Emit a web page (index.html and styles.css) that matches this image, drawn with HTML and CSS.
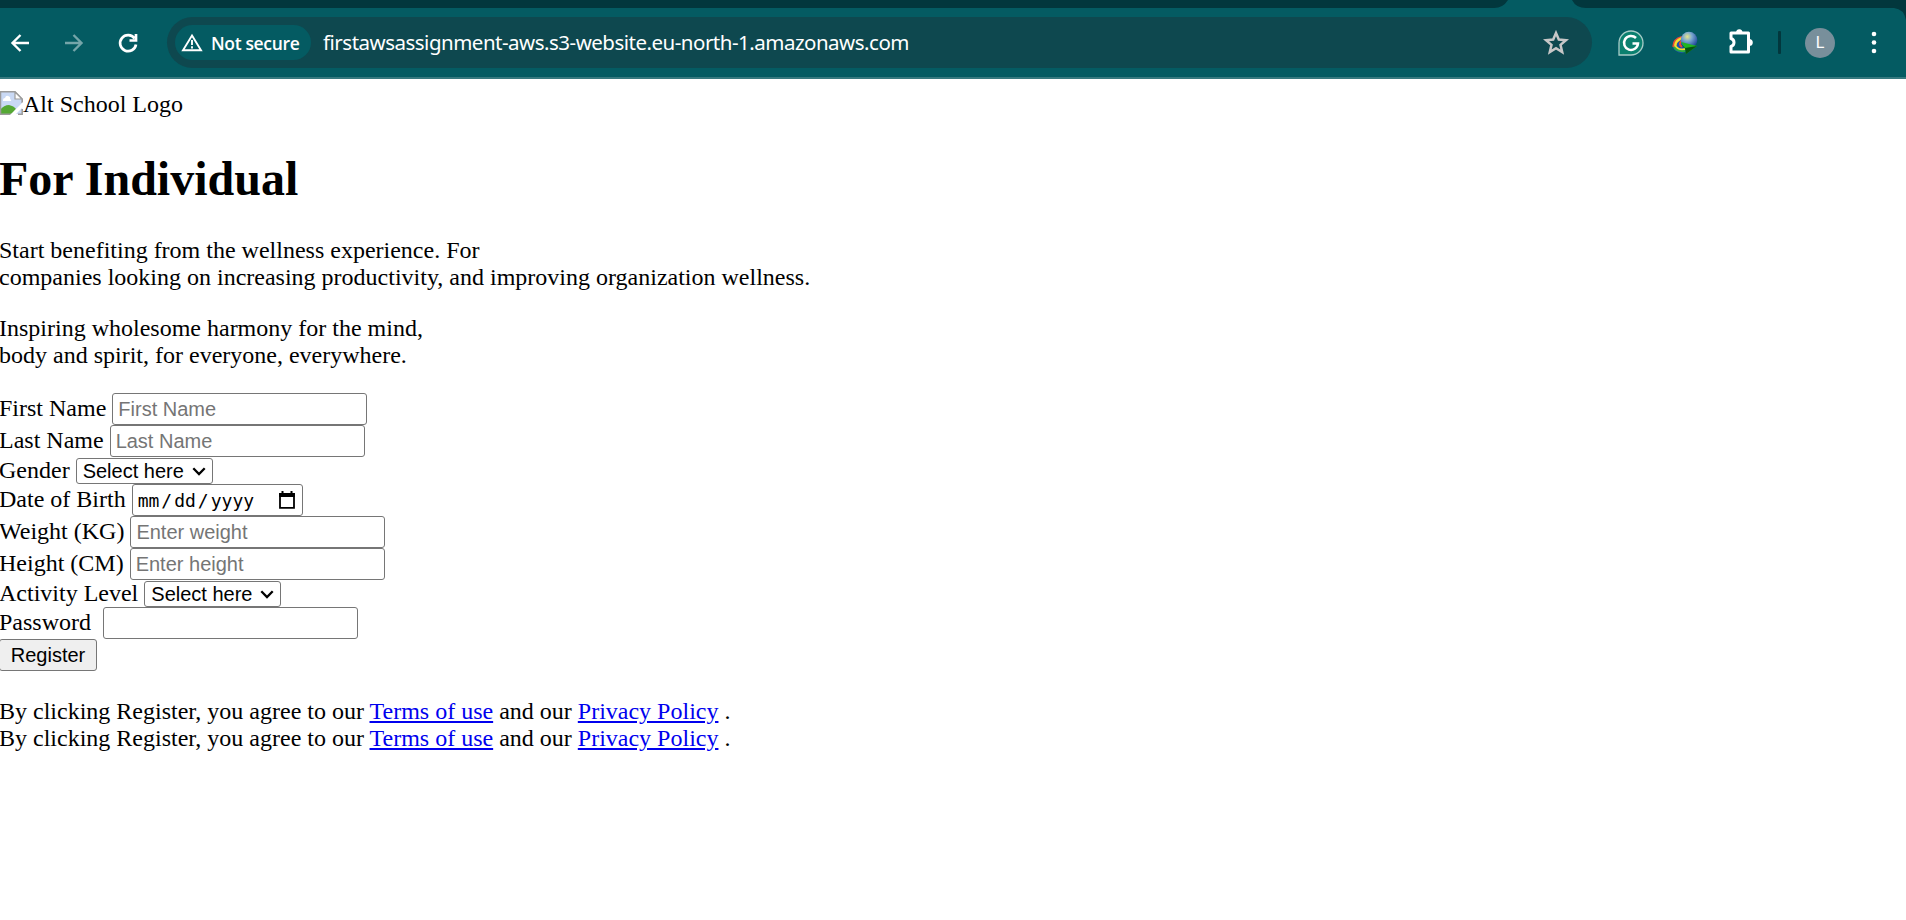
FILE: index.html
```html
<!DOCTYPE html>
<html lang="en">
<head>
<meta charset="utf-8">
<title>For Individual</title>
<link rel="stylesheet" href="styles.css">
</head>
<body>
<header class="browser">
  <div class="tabs">
    <svg class="tab-shape" width="426" height="24" viewBox="0 0 426 24"><path d="M0 0H28Q23 8 14 8H0ZM92 0Q96 8 106 8H414Q424 9 426 20V0Z" fill="#02373d"/></svg>
  </div>
  <div class="toolbar">
    <svg class="nav back" width="20" height="20" viewBox="0 0 20 20"><path d="M19 10H3M10.5 2L2.5 10L10.5 18" /></svg>
    <svg class="nav forward" width="20" height="20" viewBox="0 0 20 20"><path d="M1 10H17M9.500 2L17.500 10L9.500 18" /></svg>
    <svg class="nav reload" width="22" height="22" viewBox="0 0 22 22"><path d="M17.600 6.500A8 8 0 1 0 19 12.500M19 2V8.500H12.500" /></svg>
    <div class="omnibox">
      <div class="chip">
        <svg width="22" height="19" viewBox="0 0 22 19"><path d="M11 2.500L20 17.200H2Z" fill="none" stroke="#fff" stroke-width="1.900"/><path d="M11 7V12M11 13.300V15.500" stroke="#fff" stroke-width="1.900"/></svg>
        <span class="chip-text">Not secure</span>
      </div>
      <span class="url">firstawsassignment-aws.s3-website.eu-north-1.amazonaws.com</span>
      <svg class="star" width="26" height="25" viewBox="0 0 26 25"><path d="M13 3L15.800 9.600L23 10.200L17.500 14.900L19.200 22L13 18.200L6.800 22L8.500 14.900L3 10.200L10.200 9.600Z" fill="none" stroke="#c7c7c7" stroke-width="2.500"/></svg>
    </div>
    <svg class="ext grammarly" width="26" height="26" viewBox="0 0 26 26"><path d="M1 25V13A12 12 0 1 1 13 25Z" fill="#0b806f" stroke="#a8ccc8" stroke-width="1.300"/><path d="M18 8A7 7 0 1 0 20 13.500H14.500" fill="none" stroke="#fff" stroke-width="2.500"/></svg>
    <svg class="ext idm" width="26" height="24" viewBox="0 0 26 24">
      <defs><radialGradient id="globe" cx=".4" cy=".3" r=".7"><stop offset="0" stop-color="#e6e58a"/><stop offset=".4" stop-color="#7ba9cf"/><stop offset="1" stop-color="#1d4399"/></radialGradient></defs>
      <path d="M9 5C0 8-1 17 4 20C8 23 12 22 15 20L10 15Z" fill="#1a4fb0"/>
      <path d="M10 6C3 8 1 12 1.500 16" fill="none" stroke="#e84835" stroke-width="2"/>
      <path d="M11 7C3 9 2 15 5 17Q8 20 13 18" fill="none" stroke="#f4dc2c" stroke-width="2.400"/>
      <path d="M2 16Q5 21 13 20" fill="none" stroke="#29a945" stroke-width="2"/>
      <path d="M11 9C7 11 7 14 10 16" fill="none" stroke="#e84835" stroke-width="2"/>
      <circle cx="17" cy="9" r="8.300" fill="url(#globe)"/>
      <path d="M9 11L25 15L14 23L13 17Z" fill="#20b51f"/><path d="M13 17L25 15L14 23Z" fill="#07540f"/>
    </svg>
    <svg class="ext puzzle" width="27" height="27" viewBox="0 0 27 27"><path d="M4 5H21.500V24H4V18.500Q7 17.500 7 14.500T4 10.500Z" fill="none" stroke="#fff" stroke-width="3" stroke-linejoin="round"/><path d="M9 5A3.300 3.800 0 0 1 15.600 5ZM22 11A3.800 3.500 0 0 1 22 18Z" fill="#fff"/></svg>
    <span class="divider"></span>
    <span class="avatar">L</span>
    <svg class="menu" width="6" height="24" viewBox="0 0 6 24"><circle cx="3" cy="3" r="2.300"/><circle cx="3" cy="11.500" r="2.300"/><circle cx="3" cy="20" r="2.300"/></svg>
  </div>
</header>

<main class="page">
  <div class="logo">
    <svg width="24" height="24" viewBox="-1 0 24 24"><path d="M0 .8H15L22.200 8V23H0" fill="#c9d9f5"/><path d="M0 19Q4 14 9 14Q14 15 16 18L12 23H0Z" fill="#55a834"/><path d="M3 9Q3 7 5 7Q6 4 8 5Q11 6 10 8Q12 9 11 10H3Z" fill="#fff"/><path d="M0 .8H15L22.200 8V12M.5 1V23.200H12M18 23.200H22.200V18" fill="none" stroke="#9b9b9b" stroke-width="1.500"/><path d="M15 1V8H22Z" fill="#fff" stroke="#9b9b9b" stroke-width="1.200"/><path d="M23 11V16L15 24H10Z" fill="#fff"/></svg>
    <span>Alt School Logo</span>
  </div>
  <h1 class="title">For Individual</h1>
  <p class="text">Start benefiting from the wellness experience. For<br>companies looking on increasing productivity, and improving organization wellness.</p>
  <p class="text">Inspiring wholesome harmony for the mind,<br>body and spirit, for everyone, everywhere.</p>
  <form class="form">
    <div class="row"><label for="first">First Name</label><input class="field" id="first" placeholder="First Name"></div>
    <div class="row"><label for="last">Last Name</label><input class="field" id="last" placeholder="Last Name"></div>
    <div class="row short"><label>Gender</label><span class="select">Select here<svg width="14" height="9" viewBox="0 0 14 9"><path d="M1.300 1.300L7 7L12.700 1.300"/></svg></span></div>
    <div class="row"><label>Date of Birth</label><span class="date"><span>mm<i>/</i>dd<i>/</i>yyyy</span><svg width="16" height="18" viewBox="0 0 16 18"><path d="M1 3H15V16.800H1Z" fill="none" stroke="#000" stroke-width="1.800"/><path d="M.2 2H15.800V6H.2ZM2.500 0H4.500V3H2.500ZM11.500 0H13.500V3H11.500Z"/></svg></span></div>
    <div class="row"><label for="weight">Weight (KG)</label><input class="field" id="weight" placeholder="Enter weight"></div>
    <div class="row"><label for="height">Height (CM)</label><input class="field" id="height" placeholder="Enter height"></div>
    <div class="row short"><label>Activity Level</label><span class="select">Select here<svg width="14" height="9" viewBox="0 0 14 9"><path d="M1.300 1.300L7 7L12.700 1.300"/></svg></span></div>
    <div class="row password"><label for="pass">Password</label><input class="field" id="pass" type="password"></div>
    <button class="register" type="button">Register</button>
  </form>
  <p class="terms">By clicking Register, you agree to our <a href="#">Terms of use</a> and our <a href="#">Privacy Policy</a> .<br>By clicking Register, you agree to our <a href="#">Terms of use</a> and our <a href="#">Privacy Policy</a> .</p>
</main>
</body>
</html>
```
FILE: styles.css
```css
* { box-sizing: border-box; }
body {
  margin: 0;
  height: 920px;
  overflow: hidden;
  background: #fff;
  color: #000;
  font: 24px/27px "Liberation Serif", serif;
}
.browser { position: relative; height: 79px; background: #045b62; border-bottom: 2px solid #36797f; }
.tabs { height: 8px; background: linear-gradient(90deg, #02373d 1480px, #045b62 1480px); }
.tab-shape { position: absolute; top: 0; right: 0; }
.toolbar { display: flex; align-items: center; height: 69px; padding-right: 29px; }
.nav { fill: none; stroke: #fff; stroke-width: 2.4; }
.back { margin-left: 10px; }
.forward { margin-left: 34px; opacity: .45; }
.reload { margin-left: 33px; stroke-width: 2.7; }
.omnibox {
  display: flex;
  align-items: center;
  width: 1425px;
  height: 51px;
  margin-left: 28px;
  padding: 0 23px 0 8px;
  border-radius: 26px;
  background: #0e484f;
}
.chip {
  display: flex;
  align-items: center;
  gap: 8px;
  width: 136px;
  height: 35px;
  padding-left: 6px;
  border-radius: 18px;
  background: #045b62;
}
.chip-text { color: #fff; font: 600 17.5px/24px "Open Sans", sans-serif; letter-spacing: -.35px; white-space: nowrap; }
.url { margin: -2px 0 0 12px; color: #fff; font: 20.5px/28px "Noto Sans", sans-serif; letter-spacing: -.5px; white-space: nowrap; }
.star { margin-left: auto; }
.ext { flex: none; }
.grammarly { margin-left: 26px; }
.idm { margin-left: 28px; }
.puzzle { margin-left: 29px; margin-top: -3px; }
.divider { width: 3px; height: 23px; margin-left: 24px; border-radius: 1px; background: #02373d; }
.avatar {
  width: 30px;
  height: 30px;
  margin-left: 24px;
  border-radius: 50%;
  background: #788f9b;
  color: #fff;
  font: 16px/30px Roboto, sans-serif;
  text-align: center;
}
.menu { margin-left: auto; fill: #fff; }
.page { margin-left: -1px; padding-top: 12px; }
.logo { display: flex; height: 27px; }
.title { margin: 34px 0 0; font-size: 48px; line-height: 54px; }
.text { margin: 31px 0 0; }
.text + .text { margin-top: 24px; }
.form { margin-top: 24px; }
.row { display: flex; align-items: flex-start; gap: 6px; height: 32px; }
.row label { line-height: 30px; white-space: nowrap; }
.short { height: 27px; }
.short label { line-height: 27px; }
.password { gap: 12px; }
.field, .select, .date, .register { border: 1px solid #767676; border-radius: 3px; background: #fff; font: 20px/24px "Liberation Sans", sans-serif; }
.field { width: 255px; height: 32px; margin: 0; padding: 1px 5px; }
.field::placeholder { color: #757575; opacity: 1; }
.select { display: flex; align-items: center; justify-content: space-between; width: 137px; height: 26px; margin-top: 1px; padding: 0 6px; }
.select svg { fill: none; stroke: #000; stroke-width: 2.3; }
.date { display: flex; align-items: center; justify-content: space-between; width: 171px; height: 32px; padding: 2px 7px 0 5px; font-family: "DejaVu Sans Mono", monospace; font-size: 18px; }
.date i { margin: 0 2px; font-style: normal; }
.date svg { margin-top: -2px; }
.register { display: block; width: 98px; height: 32px; padding: 0; background: #efefef; }
.terms { margin: 27px 0 0; }
.terms a { color: #00e; }
```
